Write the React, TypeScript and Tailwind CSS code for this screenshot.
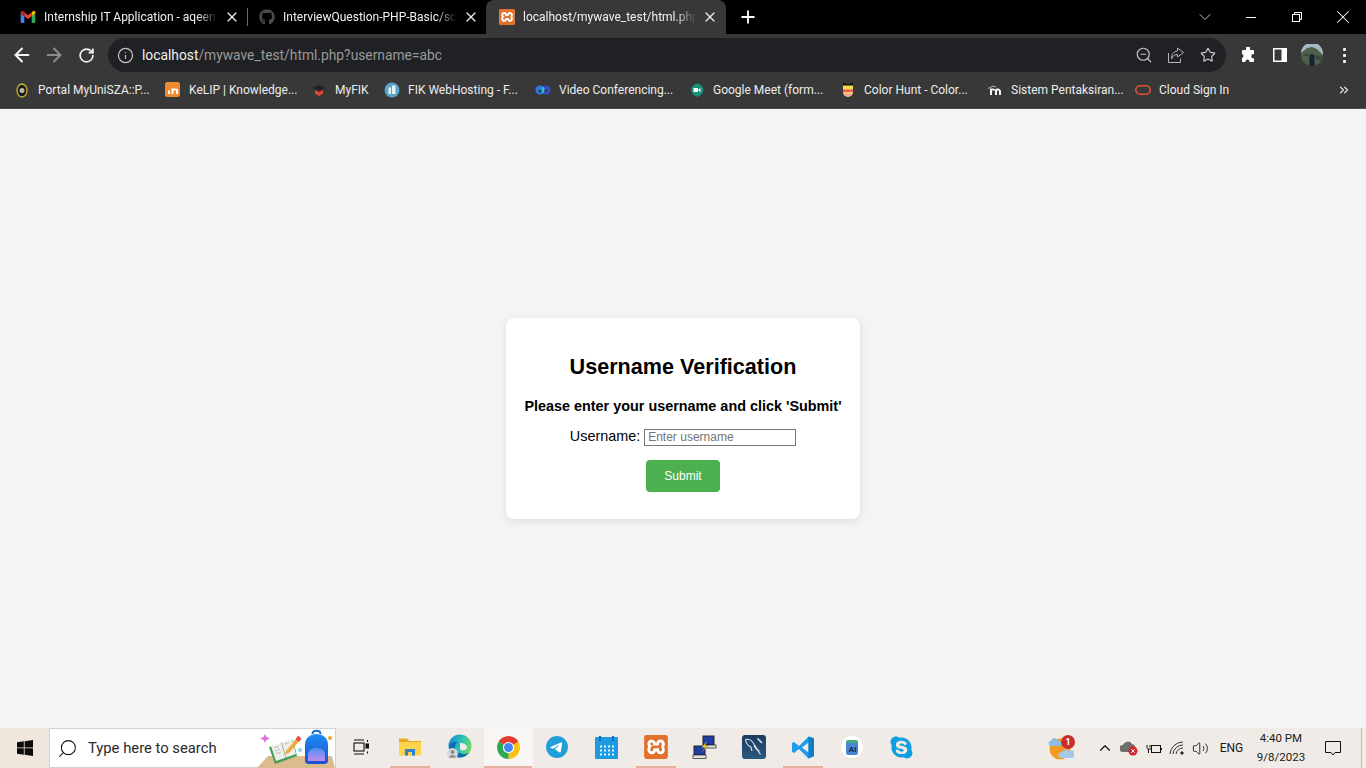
import type { ReactNode } from "react";
import {
  ArrowLeft,
  ArrowRight,
  ChevronDown,
  ChevronUp,
  ChevronsRight,
  Info,
  Plus,
  RotateCw,
  Search,
  Star,
  Volume2,
  X,
  ZoomOut,
} from "lucide-react";
import { FaGithub, FaSkype } from "react-icons/fa";
import { SiTelegram, SiXampp } from "react-icons/si";

const uiFont = "font-['Roboto',sans-serif]";

const GmailIcon = () => (
  <svg width="16" height="16" viewBox="0 0 24 24">
    <path d="M1 6.5V19a2 2 0 0 0 2 2h3.5V11z" fill="#4285f4" />
    <path d="M23 6.5V19a2 2 0 0 1-2 2h-3.5V11z" fill="#34a853" />
    <path d="M6.5 21V11L1 6.5V5a2.2 2.2 0 0 1 3.6-1.7L6.5 5z" fill="#c5221f" />
    <path d="M17.5 21V11L23 6.5V5a2.2 2.2 0 0 0-3.6-1.7L17.5 5z" fill="#fbbc04" />
    <path d="M6.5 5 12 9.2 17.5 5v6L12 15l-5.5-4z" fill="#ea4335" />
  </svg>
);

const XamppIcon = ({ size }: { size: number }) => (
  <span className="flex items-center justify-center rounded-[3px] bg-white">
    <SiXampp size={size} color="#e2702b" />
  </span>
);

const ChromeIcon = () => (
  <svg width="25" height="25" viewBox="0 0 24 24">
    <path d="M12 12 2.5 6.5a11 11 0 0 1 19 0z" fill="#e33b2e" />
    <path d="M12 12l9.5-5.5A11 11 0 0 1 12 23z" fill="#fbc116" />
    <path d="M12 12v11A11 11 0 0 1 2.5 6.5z" fill="#2da94f" />
    <circle cx="12" cy="12" r="5.4" fill="#fff" />
    <circle cx="12" cy="12" r="4.3" fill="#4285f4" />
  </svg>
);

const EdgeIcon = () => (
  <svg width="26" height="26" viewBox="0 0 26 26">
    <defs>
      <linearGradient id="edgeTop" x1="0" y1="0.3" x2="1" y2="0.6">
        <stop offset="0" stopColor="#1a8fd0" />
        <stop offset="0.55" stopColor="#2cc4b4" />
        <stop offset="1" stopColor="#7bdc5a" />
      </linearGradient>
    </defs>
    <circle cx="14" cy="12" r="11.5" fill="url(#edgeTop)" />
    <path d="M14 9c4 0 7 1.500 7 4.500 0 2-2 3-4 3-3 0-3-2-3-3z" fill="#f0ebe6" />
    <path d="M3 11c2-3 6-4 9-3-2 1-3 3-3 5 0 4 4 7 9 7 2 0 4-1 5-2-2 3-5 5.500-9 5.500C8 23.500 2.500 18 3 11z" fill="#0d6cb5" />
    <circle cx="6.500" cy="19.500" r="5.500" fill="#d8d8d8" />
    <circle cx="6.500" cy="18" r="2" fill="#8a8a8a" />
    <path d="M3 23.500c.5-3.500 6.500-3.500 7 0z" fill="#8a8a8a" />
  </svg>
);

const ExplorerIcon = () => (
  <svg width="22" height="20" viewBox="0 0 22 20">
    <path d="M0 1.500h8l2 2.500h12v3H0z" fill="#e5a91b" />
    <path d="M0 5h22v13.500H0z" fill="#fbd34c" />
    <path d="M6 12h10v6.500h-3V15H9v3.500H6z" fill="#2f7fc9" />
  </svg>
);

const CalendarIcon = () => (
  <svg width="23" height="23" viewBox="0 0 23 23">
    <rect y="1" width="23" height="22" rx="1" fill="#1e9be0" />
    <rect x="4" width="2" height="5" fill="#0c6fb5" />
    <rect x="17" width="2" height="5" fill="#0c6fb5" />
    {[6, 10, 14, 18].map((x) =>
      [9.5, 13.5, 17.5].map((y) => (
        <rect key={`${x}-${y}`} x={x - 1} y={y} width="2" height="2" fill="#e8f6ff" />
      ))
    )}
  </svg>
);

const PuttyIcon = () => (
  <svg width="25" height="25" viewBox="0 0 25 25">
    <rect x="11" y="1" width="11" height="9" fill="#1f3fa8" stroke="#222" />
    <rect x="12" y="10" width="12" height="3" fill="#e2e2e2" stroke="#222" strokeWidth=".7" />
    <rect x="2" y="11" width="11" height="9" fill="#1f3fa8" stroke="#222" />
    <rect x="1" y="20" width="13" height="3.5" fill="#e2e2e2" stroke="#222" strokeWidth=".7" />
    <path d="M15 6 9.500 12.500H13L10 17l6.500-6.500H13z" fill="#f7e11b" stroke="#555" strokeWidth=".4" />
  </svg>
);

const WorkbenchIcon = () => (
  <svg width="24" height="24" viewBox="0 0 24 24" fill="none" stroke="#dfe8ef" strokeWidth="1.100">
    <defs>
      <linearGradient id="wbBg" x1="0" y1="0" x2="0" y2="1">
        <stop offset="0" stopColor="#1a3c5c" />
        <stop offset="1" stopColor="#2b5a80" />
      </linearGradient>
    </defs>
    <rect width="24" height="24" rx="3" fill="url(#wbBg)" stroke="none" />
    <path d="M3.500 4.500c4-1 7 1.500 9 5.500l6 9.500" />
    <path d="M3.500 4.500c.5 4 3 6.500 5.500 7.500l1 4" />
    <path d="M12 10c1 3 3 5 5.500 6" />
    <path d="M15.500 3.500 20 8" strokeWidth="1.600" />
  </svg>
);

const VscodeIcon = () => (
  <svg width="24" height="25" viewBox="0 0 24 24">
    <path d="M17.500 1 8 10.500 3 6.500 1 7.500v9l2 1 5-4 9.500 9.500 5.500-2.500v-18zM17.500 7v10L11 12z" fill="#1f9cf0" />
    <path d="M17.500 1 23 3.500v17L17.500 23z" fill="#0e7cc6" />
  </svg>
);

const AiIcon = () => (
  <span className="flex h-[22px] w-[22px] items-center justify-center rounded-full bg-white">
    <span className="flex h-[15px] w-[12px] items-end justify-center rounded-[2px] border-t-[3px] border-[#3fae7c] bg-[#4b86d6] font-['Liberation_Sans',sans-serif] text-[8px] font-bold leading-[11px] text-[#17233f]">
      AI
    </span>
  </span>
);

const WeatherIcon = () => (
  <span className="relative block h-[24px] w-[26px]">
    <svg width="26" height="24" viewBox="0 0 26 24">
      <circle cx="12" cy="13" r="10.500" fill="#f39a25" />
      <path d="M2 10a3 3 0 0 1 1-5.500 4 4 0 0 1 7.500.5 2.500 2.500 0 0 1 1.500 5z" fill="#8fbde0" />
      <path d="M13 22a3 3 0 0 1 1-6 4 4 0 0 1 7-1 3.500 3.500 0 0 1 4 7z" fill="#a5c8e6" />
    </svg>
    <span className="absolute -right-[1px] -top-[1px] flex h-[14px] w-[14px] items-center justify-center rounded-full bg-[#c9302a] text-[9px] font-bold leading-none text-white">
      1
    </span>
  </span>
);

const SearchArt = () => (
  <svg width="80" height="39" viewBox="0 0 80 39" className="shrink-0">
    <defs>
      <linearGradient id="bagBody" x1="0" y1="0" x2="0" y2="1">
        <stop offset="0" stopColor="#1f8df0" />
        <stop offset="1" stopColor="#1a4fd0" />
      </linearGradient>
      <linearGradient id="bagPocket" x1="0" y1="0" x2="0" y2="1">
        <stop offset="0" stopColor="#4f8ff0" />
        <stop offset="1" stopColor="#c08cf0" />
      </linearGradient>
    </defs>
    <path d="M13 27h64l3 12H2z" fill="#dcbc8f" />
    <path d="M10 5l1.500 3 3.500 1.500-3.500 1.500L10 14l-1.500-3L5 9.500 8.500 8z" fill="#e06fe2" />
    <path d="M14 18 38 11l4 16-22 8z" fill="#3f9e58" />
    <path d="M16 17l21-7 4 15-20 7z" fill="#eef0e8" />
    <path d="M26.500 13.500 31 29" stroke="#a9b3a5" strokeWidth="1" />
    <path d="M19 19l5-2M20 22l5-2M21 25l5-2M30 15l4-1.500" stroke="#b9c0b5" strokeWidth="1" />
    <path d="M31 22 41 10l3 2.500-10 11.500-4 1.500z" fill="#f1aa3e" />
    <path d="M40.500 10.500 43 6.500l3.500 3-2.500 3.500z" fill="#e6503f" />
    <circle cx="45" cy="21" r="2" fill="#7fd6ec" />
    <path d="M50 16c0-7 5-11 11.500-11S73 9 73 16v16c0 2-2 3-4 3H54c-2 0-4-1-4-3z" fill="url(#bagBody)" />
    <path d="M57.500 5c0-4.500 8-4.500 8 0" fill="none" stroke="#1f6ad0" strokeWidth="2" />
    <path d="M53 26c0-5 3.500-7 8.500-7s8.500 2 8.500 7v6H53z" fill="url(#bagPocket)" />
    <circle cx="75" cy="9" r="2" fill="#f5a623" />
  </svg>
);

const tabs = [
  {
    title: "Internship IT Application - aqeem",
    icon: <GmailIcon />,
    box: "w-[248px] pl-[20px]",
    active: false,
    divider: true,
  },
  {
    title: "InterviewQuestion-PHP-Basic/scr",
    icon: <FaGithub size={16} color="#4a4a4a" />,
    box: "w-[238px] pl-[11px] pr-[7px]",
    active: false,
    divider: false,
  },
  {
    title: "localhost/mywave_test/html.php?",
    icon: <XamppIcon size={16} />,
    box: "w-[240px] pl-[13px] pr-[8px]",
    active: true,
    divider: false,
  },
];

const bookmarks: { label: string; width: string; icon: ReactNode }[] = [
  {
    label: "Portal MyUniSZA::P...",
    width: "w-[111px]",
    icon: (
      <svg width="16" height="16" viewBox="0 0 16 16">
        <ellipse cx="8" cy="8.500" rx="5" ry="6.500" fill="#1d1d1d" stroke="#c7b52e" strokeWidth="1.300" />
        <circle cx="8" cy="8.500" r="2.500" fill="#b9b9a8" />
      </svg>
    ),
  },
  {
    label: "KeLIP | Knowledge...",
    width: "w-[106px]",
    icon: (
      <svg width="16" height="16" viewBox="0 0 16 16">
        <rect width="15" height="15" rx="2.500" fill="#f08a2e" />
        <path d="M3 12V8.500h2V12zM6.500 12V6.500H11a2 2 0 0 1 2 2V12h-2V8.500H8.500V12z" fill="#fff" />
      </svg>
    ),
  },
  {
    label: "MyFIK",
    width: "w-[33px]",
    icon: (
      <svg width="16" height="16" viewBox="0 0 16 16">
        <path d="M1 6 8 3l7 3-7 3z" fill="#222" />
        <path d="M4 8l4 2 4-2v3.500L8 14l-4-2.500z" fill="#e0492c" />
      </svg>
    ),
  },
  {
    label: "FIK WebHosting - F...",
    width: "w-[111px]",
    icon: (
      <svg width="16" height="16" viewBox="0 0 16 16">
        <circle cx="8" cy="8" r="7.500" fill="#5ba4c9" />
        <path d="M4.500 5.500H7V12H4.500zM8 3.500h3.500V12H8z" fill="#e4f1f7" />
      </svg>
    ),
  },
  {
    label: "Video Conferencing...",
    width: "w-[114px]",
    icon: (
      <svg width="16" height="16" viewBox="0 0 16 16">
        <circle cx="5" cy="8" r="4.500" fill="#2c7be5" />
        <circle cx="11" cy="8" r="4.500" fill="#2f52c9" />
        <path d="M8 4.600a4.500 4.500 0 0 1 0 6.800 4.500 4.500 0 0 1 0-6.800z" fill="#27c3d8" />
        <circle cx="5" cy="9" r="1.500" fill="#383838" />
        <circle cx="11" cy="9" r="1.500" fill="#383838" />
      </svg>
    ),
  },
  {
    label: "Google Meet (form...",
    width: "w-[111px]",
    icon: (
      <svg width="16" height="16" viewBox="0 0 16 16">
        <path d="M8 1.500a6.500 6.500 0 0 1 1 12.900L8 16v-1.600A6.500 6.500 0 0 1 8 1.500z" fill="#1a8f7a" />
        <path d="M4.500 6h4.500v4H4.500zM9.500 7.500l2-1.500v4l-2-1.500z" fill="#fff" />
      </svg>
    ),
  },
  {
    label: "Color Hunt - Color...",
    width: "w-[107px]",
    icon: (
      <svg width="16" height="16" viewBox="0 0 16 16">
        <path d="M3 3h10v7a5 5 0 0 1-10 0z" fill="#f5d94a" />
        <path d="M3 7.500h10V10H3z" fill="#ee5a5a" />
        <path d="M3.500 11.500h9A5 5 0 0 1 3.500 11.500z" fill="#f0a0c0" />
        <path d="M3 0v3.500h10V0l-2 2H5z" fill="#111" />
      </svg>
    ),
  },
  {
    label: "Sistem Pentaksiran...",
    width: "w-[108px]",
    icon: (
      <svg width="16" height="16" viewBox="0 0 16 16">
        <path d="M3 13V6.500h2.500a3 3 0 0 1 2.500 1 3 3 0 0 1 2.500-1A3 3 0 0 1 14 9.500V13h-2V9.500a1 1 0 0 0-2 0V13H8V9.500a1 1 0 0 0-1-1H5V13z" fill="#f2f2f2" />
        <path d="M1 6.500 6 4l3 1" stroke="#bdbdbd" fill="none" />
      </svg>
    ),
  },
  {
    label: "Cloud Sign In",
    width: "w-[72px]",
    icon: (
      <svg width="16" height="16" viewBox="0 0 16 16">
        <rect x=".8" y="3.800" width="14.400" height="8.400" rx="4.200" fill="none" stroke="#e2503a" strokeWidth="1.600" />
      </svg>
    ),
  },
];

const taskItems: { key: string; icon: ReactNode; open?: boolean; active?: boolean }[] = [
  {
    key: "view",
    icon: (
      <svg width="16" height="16" viewBox="0 0 16 16" fill="none" stroke="#111" strokeWidth="1.100">
        <path d="M1 1h10M1 15h10" />
        <rect x="1" y="4" width="10" height="8" />
        <path d="M14.500 1v2M14.500 12.500v2" />
        <rect x="13" y="5" width="2.500" height="4" fill="#111" />
      </svg>
    ),
  },
  { key: "explorer", icon: <ExplorerIcon />, open: true },
  { key: "edge", icon: <EdgeIcon /> },
  { key: "chrome", icon: <ChromeIcon />, open: true, active: true },
  {
    key: "telegram",
    icon: (
      <span className="flex h-[22px] w-[22px] items-center justify-center rounded-full bg-white">
        <SiTelegram size={22} color="#229ed9" />
      </span>
    ),
  },
  { key: "calendar", icon: <CalendarIcon /> },
  { key: "xampp", icon: <XamppIcon size={24} />, open: true },
  { key: "putty", icon: <PuttyIcon /> },
  { key: "mysql", icon: <WorkbenchIcon /> },
  { key: "vscode", icon: <VscodeIcon />, open: true },
  { key: "ai", icon: <AiIcon /> },
  { key: "skype", icon: <FaSkype size={25} color="#0f9fe0" /> },
];

const App = () => {
  return (
    <div className="flex h-screen w-full flex-col overflow-hidden bg-[#f4f4f4]">
      {/* tab strip */}
      <div className={`flex h-[34px] shrink-0 items-stretch bg-black text-[12px] text-[#f1f1f1] ${uiFont}`}>
        {tabs.map((tab) => (
          <div
            key={tab.title}
            className={`flex shrink-0 items-center ${tab.box} ${tab.active ? "rounded-t-lg bg-[#383838]" : ""}`}
          >
            <span className="flex h-4 w-4 shrink-0 items-center justify-center">{tab.icon}</span>
            <span className="ml-[8px] min-w-0 flex-1 overflow-hidden whitespace-nowrap [mask-image:linear-gradient(to_right,black_88%,transparent)]">
              {tab.title}
            </span>
            <X size={16} strokeWidth={1.8} className="ml-[6px] shrink-0" color="#f1f1f1" />
            {tab.divider && <span className="ml-[7px] h-[18px] w-px shrink-0 bg-[#6a6a6a]" />}
          </div>
        ))}
        <div className="ml-[12px] flex items-center">
          <Plus size={20} strokeWidth={2.2} color="#fff" />
        </div>
        <div className="ml-auto flex items-center">
          <span className="flex w-[46px] justify-center">
            <ChevronDown size={20} strokeWidth={1.1} color="#d0d0d0" />
          </span>
          <span className="flex w-[46px] justify-center">
            <span className="h-px w-[10px] bg-white" />
          </span>
          <span className="flex w-[46px] justify-center">
            <svg width="10" height="10" viewBox="0 0 10 10" fill="none" stroke="#fff">
              <path d="M2.500 2.500V.5h7v7h-2" />
              <rect x=".5" y="2.500" width="7" height="7" />
            </svg>
          </span>
          <span className="flex w-[46px] justify-center">
            <X size={22} strokeWidth={1.1} color="#fff" />
          </span>
        </div>
      </div>

      {/* toolbar */}
      <div className={`flex h-[42px] shrink-0 items-start bg-[#383838] px-[6px] pt-[4px] ${uiFont}`}>
        <div className="flex h-[34px] items-center">
          <span className="flex w-[32px] justify-center">
            <ArrowLeft size={22} strokeWidth={2.2} color="#f4f4f4" />
          </span>
          <span className="flex w-[32px] justify-center">
            <ArrowRight size={22} strokeWidth={2.2} color="#8b8b8b" />
          </span>
          <span className="flex w-[32px] justify-center">
            <RotateCw size={17} strokeWidth={2.4} color="#f4f4f4" />
          </span>
        </div>
        <div className="ml-[6px] flex h-[34px] flex-1 items-center rounded-full bg-[#202124] pl-[9px] pr-[2px]">
          <Info size={17} strokeWidth={1.7} color="#c4c4c4" />
          <span className="ml-[8px] text-[13.8px] text-[#f1f1f1]">
            localhost<span className="text-[#9a9a9a]">/mywave_test/html.php?username=abc</span>
          </span>
          <div className="ml-auto flex items-center">
            <span className="flex w-[32px] justify-center">
              <ZoomOut size={18} strokeWidth={1.6} color="#c4c4c4" />
            </span>
            <span className="flex w-[32px] justify-center">
              <svg width="16" height="16" viewBox="0 0 16 16" fill="none" stroke="#b5b5b5" strokeWidth="1">
                <path d="M.5 6v9.500h12v-4" />
                <path d="M9.500 1 15.500 5.500 9.500 10V7.500C6.500 7.500 4.500 9 3.500 12c0-5 2-7.500 6-8z" />
              </svg>
            </span>
            <span className="flex w-[32px] justify-center">
              <Star size={16} strokeWidth={1.8} color="#c4c4c4" />
            </span>
          </div>
        </div>
        <div className="ml-[6px] flex h-[34px] items-center">
          <span className="flex w-[32px] justify-center">
            <svg width="16" height="16" viewBox="0 0 16 16" fill="#fff">
              <path d="M6 1a2 2 0 0 1 4 0v2h3a1 1 0 0 1 1 1v3h-.5a2.200 2.200 0 0 0 0 4.500H14V14a1 1 0 0 1-1 1H9.500v-.5a2 2 0 0 0-4 0v.5H3a1 1 0 0 1-1-1v-3H1.500a2 2 0 0 0 0-4H2V4a1 1 0 0 1 1-1h3z" />
            </svg>
          </span>
          <span className="flex w-[32px] justify-center">
            <svg width="14" height="14" viewBox="0 0 14 14">
              <rect width="14" height="14" fill="#fff" />
              <rect x="1.500" y="1.500" width="7" height="11" fill="#383838" />
            </svg>
          </span>
          <span className="flex w-[32px] justify-center">
            <svg width="22" height="22" viewBox="0 0 22 22">
              <circle cx="11" cy="11" r="11" fill="#4f5f4e" />
              <path d="M0 9 6 4l5-1 5 2 6 6v-1A11 11 0 0 0 0 9z" fill="#a9b7c2" />
              <path d="M0 13l6-4 4 3H0zM14 11l8 2-1 4-7-2z" fill="#3d4a3a" />
              <path d="M8.500 22v-9.500a2.500 2.500 0 0 1 5 0V22z" fill="#1a2230" />
            </svg>
          </span>
          <span className="flex w-[32px] flex-col items-center gap-[3px]">
            <span className="h-[3px] w-[3px] rounded-[1px] bg-[#f1f1f1]" />
            <span className="h-[3px] w-[3px] rounded-[1px] bg-[#f1f1f1]" />
            <span className="h-[3px] w-[3px] rounded-[1px] bg-[#f1f1f1]" />
          </span>
        </div>
      </div>

      {/* bookmarks */}
      <div
        className={`flex h-[33px] shrink-0 items-center gap-[16px] border-b border-[#4a4a4a] bg-[#383838] pb-[4px] pl-[14px] pr-[15px] text-[12px] text-[#ededed] ${uiFont}`}
      >
        {bookmarks.map((mark) => (
          <div key={mark.label} className="flex items-center gap-[8px]">
            <span className="flex h-4 w-4 items-center justify-center">{mark.icon}</span>
            <span className={`whitespace-nowrap ${mark.width}`}>{mark.label}</span>
          </div>
        ))}
        <ChevronsRight size={14} strokeWidth={2} color="#ededed" className="ml-auto" />
      </div>

      {/* page */}
      <main className="flex flex-1 items-center justify-center font-['Liberation_Sans',sans-serif] text-black">
        <form className="flex h-[201px] w-[354px] flex-col items-center rounded-lg bg-white pt-[36px] shadow-[0_2px_8px_rgba(0,0,0,0.1)]">
          <h1 className="text-[21.6px] font-bold leading-[26px]">Username Verification</h1>
          <p className="mt-[18px] text-[14.4px] font-bold leading-[16px]">
            Please enter your username and click 'Submit'
          </p>
          <div className="mt-[14px] flex items-center text-[14.4px] leading-[17px]">
            <label htmlFor="username" className="mb-[2px]">
              Username:
            </label>
            <input
              id="username"
              placeholder="Enter username"
              className="ml-[4px] h-[17px] w-[152px] border border-[#767676] px-[3px] text-[12px] outline-none placeholder:text-[#757575]"
            />
          </div>
          <button
            type="button"
            className="mt-[13px] h-[32px] w-[74px] rounded-[4px] bg-[#4caf50] text-[12px] text-white"
          >
            Submit
          </button>
        </form>
      </main>

      {/* taskbar */}
      <div className={`flex h-[40px] shrink-0 items-stretch bg-[#f0ebe6] text-[#1a1a1a] ${uiFont}`}>
        <div className="flex w-[49px] shrink-0 items-center justify-center bg-[#efe6dd]">
          <svg width="16" height="16" viewBox="0 0 16 16" fill="#0b0b0b">
            <path d="M0 2.300 6.800 1.300v6.200H0zM7.600 1.200 16 0v7.500H7.600zM0 8.300h6.800v6.400L0 13.700zM7.600 8.300H16V16l-8.400-1.200z" />
          </svg>
        </div>
        <div className="flex w-[287px] shrink-0 items-center border border-[#d2d2d2] bg-white pl-[7px]">
          <Search size={21} strokeWidth={1.2} color="#111" className="-scale-x-100" />
          <span className="ml-[10px] text-[14.8px] text-[#2a2a2a]">Type here to search</span>
          <span className="ml-auto">
            <SearchArt />
          </span>
        </div>
        {taskItems.map((item) => (
          <div
            key={item.key}
            className={`flex w-[49.2px] shrink-0 flex-col items-center ${item.active ? "bg-[#f8f6f4]" : ""}`}
          >
            <span className="flex flex-1 items-center justify-center">{item.icon}</span>
            <span className={`h-[2px] ${item.active ? "w-[48px]" : "w-[40px]"} ${item.open ? "bg-[#e5b19a]" : ""}`} />
          </div>
        ))}
        <div className="ml-auto flex items-center">
          <WeatherIcon />
          <span className="ml-[19px] flex w-[24px] justify-center">
            <ChevronUp size={18} strokeWidth={1.5} color="#111" />
          </span>
          <span className="flex w-[24px] justify-center">
            <svg width="18" height="16" viewBox="0 0 18 16">
              <path d="M3 12a3.500 3.500 0 0 1 0-7 5 5 0 0 1 9-1 4 4 0 0 1 3 6v2z" fill="#6f6f6f" />
              <circle cx="13" cy="11" r="4.500" fill="#d6262b" />
              <path d="m11.200 9.200 3.600 3.600m0-3.600-3.600 3.600" stroke="#fff" />
            </svg>
          </span>
          <span className="flex w-[25px] justify-center">
            <svg width="16" height="13" viewBox="0 0 16 13" fill="none" stroke="#111">
              <rect x="5.500" y="3.500" width="9" height="7" />
              <path d="M15.500 6v2M1 3v2.500A1.500 1.500 0 0 0 2.500 7h3M4 3v2.500M2.500 7v4" />
            </svg>
          </span>
          <span className="flex w-[22px] justify-center">
            <svg width="16" height="14" viewBox="0 0 16 14" fill="none" stroke="#333">
              <path d="M1 13A13 13 0 0 1 14 1" />
              <path d="M4 13A10 10 0 0 1 14 4" />
              <path d="M7 13a7 7 0 0 1 7-6" />
              <circle cx="13" cy="12" r="1.200" fill="#111" />
            </svg>
          </span>
          <span className="flex w-[24px] justify-center">
            <Volume2 size={17} strokeWidth={1.2} color="#111" />
          </span>
          <span className="ml-[4px] w-[31px] text-center text-[12px]">ENG</span>
          <div className="ml-[5px] flex w-[58px] flex-col items-center text-[11.5px] leading-[19px]">
            <span>4:40 PM</span>
            <span>9/8/2023</span>
          </div>
          <span className="ml-[11px] flex w-[24px] justify-center">
            <svg width="16" height="15" viewBox="0 0 16 15" fill="none" stroke="#111">
              <path d="M.5.5h15v11H10l-2 2.500-2-2.500H.5z" />
            </svg>
          </span>
          <span className="ml-[16px] h-full w-[5px] border-l border-[#bdb8b3]" />
        </div>
      </div>
    </div>
  );
};

export default App;
